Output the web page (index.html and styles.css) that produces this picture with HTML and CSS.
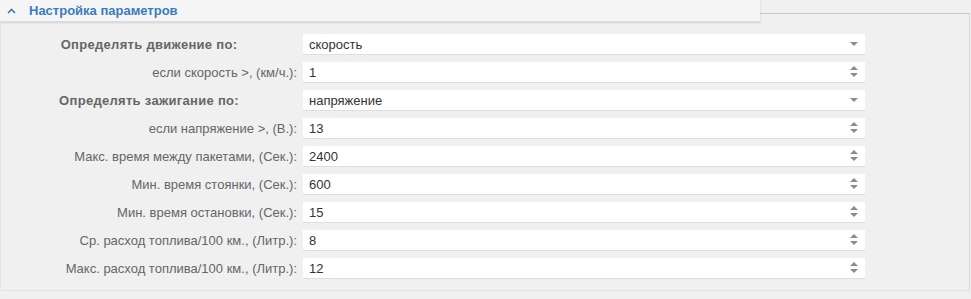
FILE: index.html
```html
<!DOCTYPE html>
<html lang="ru">
<head>
    <meta charset="UTF-8">
    <title>Настройка параметров</title>
    <link rel="stylesheet" href="styles.css">
</head>
<body>
    <div class="panel">
        <div class="panel-head">
            <div class="tab">
                <span class="chevron">
                    <svg width="9" height="6" viewBox="0 0 9 6"><path d="M1 5 L4.5 1.5 L8 5" fill="none" stroke="#3b7bbf" stroke-width="1.6"/></svg>
                </span>
                <span class="title">Настройка параметров</span>
            </div>
            <div class="head-line"></div>
        </div>

        <div class="panel-body">
            <div class="row">
                <label class="bold">Определять движение по:</label>
                <div class="field select">скорость<span class="arrow-down"></span></div>
            </div>
            <div class="row">
                <label>если скорость &gt;, (км/ч.):</label>
                <div class="field spin">1<span class="spinner"><i class="up"></i><i class="down"></i></span></div>
            </div>
            <div class="row">
                <label class="bold">Определять зажигание по:</label>
                <div class="field select">напряжение<span class="arrow-down"></span></div>
            </div>
            <div class="row">
                <label>если напряжение &gt;, (В.):</label>
                <div class="field spin">13<span class="spinner"><i class="up"></i><i class="down"></i></span></div>
            </div>
            <div class="row">
                <label>Макс. время между пакетами, (Сек.):</label>
                <div class="field spin">2400<span class="spinner"><i class="up"></i><i class="down"></i></span></div>
            </div>
            <div class="row">
                <label>Мин. время стоянки, (Сек.):</label>
                <div class="field spin">600<span class="spinner"><i class="up"></i><i class="down"></i></span></div>
            </div>
            <div class="row">
                <label>Мин. время остановки, (Сек.):</label>
                <div class="field spin">15<span class="spinner"><i class="up"></i><i class="down"></i></span></div>
            </div>
            <div class="row">
                <label>Ср. расход топлива/100 км., (Литр.):</label>
                <div class="field spin">8<span class="spinner"><i class="up"></i><i class="down"></i></span></div>
            </div>
            <div class="row">
                <label>Макс. расход топлива/100 км., (Литр.):</label>
                <div class="field spin">12<span class="spinner"><i class="up"></i><i class="down"></i></span></div>
            </div>
        </div>
    </div>
</body>
</html>
```

FILE: styles.css
```css
/* Reset */
* {
    margin: 0;
    padding: 0;
    box-sizing: border-box;
}

body {
    font-family: Arial, 'Liberation Sans', sans-serif;
    font-size: 13px;
    background-color: #f0f0f0;
    color: #333;
}

.panel {
    width: 970px;
}

/* Header */
.panel-head {
    display: flex;
    height: 23px;
    background: #f0f0f0;
}

.tab {
    width: 760px;
    height: 22px;
    background: #f5f5f5;
    border-bottom: 1px solid #dcdcdc;
    box-shadow: 0 1px 2px rgba(0, 0, 0, 0.12);
    display: flex;
    align-items: center;
    padding-left: 7px;
    position: relative;
    z-index: 1;
}

.chevron {
    display: flex;
    width: 22px;
    padding-top: 1px;
}

.title {
    color: #3b7bbf;
    font-weight: bold;
    font-size: 13px;
}

.head-line {
    flex: 1;
    margin-top: 13px;
    border-top: 1px solid #c6c6c6;
    border-right: 1px solid #d6d6d6;
}

/* Body */
.panel-body {
    border-left: 1px solid #e6e6e6;
    border-right: 1px solid #d6d6d6;
    border-bottom: 1px solid #e2e2e2;
    padding: 11px 0 11px;
    display: flex;
    flex-direction: column;
    gap: 7px;
}

.row {
    display: grid;
    grid-template-columns: 296px 562px;
    column-gap: 6px;
    align-items: center;
    height: 21px;
}

.row label {
    text-align: right;
    color: #666;
}

.row label.bold {
    text-align: center;
    font-weight: bold;
    letter-spacing: 0.3px;
}

.field {
    height: 21px;
    background: #fff;
    border-bottom: 1px solid #d9dfe8;
    padding: 0 6px;
    line-height: 21px;
    color: #333;
    position: relative;
}

.arrow-down {
    position: absolute;
    right: 7px;
    top: 8px;
    width: 0;
    height: 0;
    border-left: 4px solid transparent;
    border-right: 4px solid transparent;
    border-top: 4px solid #8c8c8c;
}

.spinner {
    position: absolute;
    right: 7px;
    top: 4px;
    display: flex;
    flex-direction: column;
    gap: 3px;
}

.spinner i {
    display: block;
    width: 0;
    height: 0;
    border-left: 4px solid transparent;
    border-right: 4px solid transparent;
}

.spinner .up {
    border-bottom: 4px solid #8c8c8c;
}

.spinner .down {
    border-top: 4px solid #8c8c8c;
}
```
